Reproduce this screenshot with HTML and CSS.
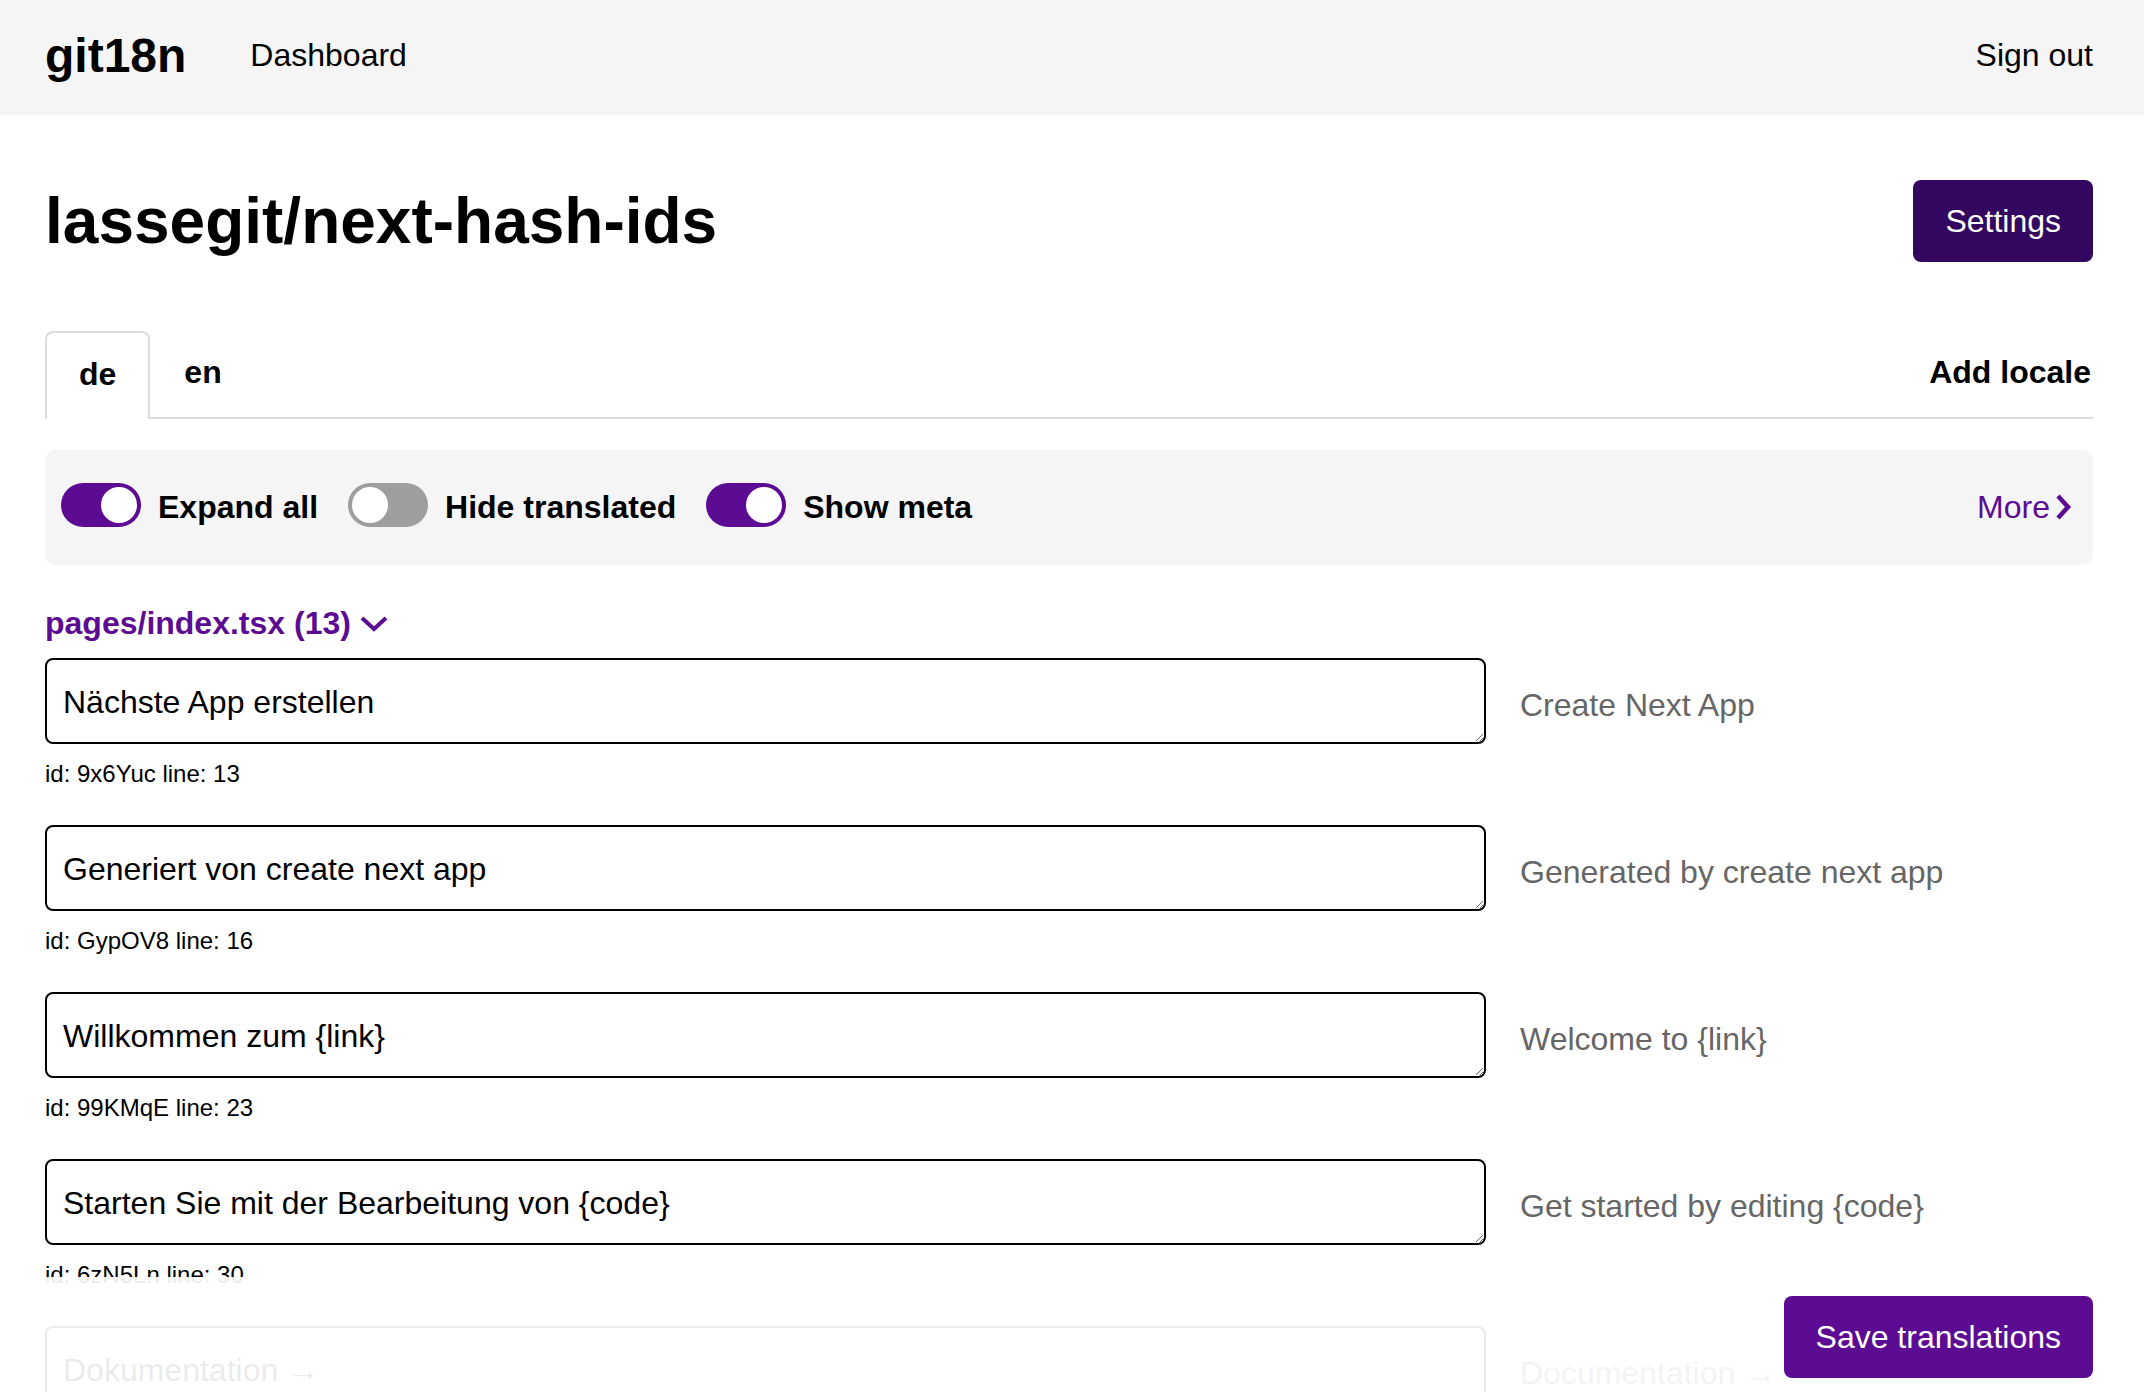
FILE: index.html
```html
<!DOCTYPE html>
<html lang="de">
<head>
<meta charset="utf-8">
<title>git18n – lassegit/next-hash-ids</title>
<link rel="stylesheet" href="styles.css">
</head>
<body>
<header class="topbar">
  <a class="logo" href="#">git18n</a>
  <a class="nav-link" href="#">Dashboard</a>
  <a class="nav-link signout" href="#">Sign out</a>
</header>

<main class="page">
  <div class="title-row">
    <h1 class="repo-title">lassegit/next-hash-ids</h1>
    <button class="btn btn-dark">Settings</button>
  </div>

  <nav class="tabs">
    <a class="tab active" href="#">de</a>
    <a class="tab" href="#">en</a>
    <a class="tab add-locale" href="#">Add locale</a>
  </nav>

  <div class="toolbar">
    <label class="toggle-item"><span class="switch on"></span><span class="toggle-label">Expand all</span></label>
    <label class="toggle-item"><span class="switch"></span><span class="toggle-label">Hide translated</span></label>
    <label class="toggle-item"><span class="switch on"></span><span class="toggle-label">Show meta</span></label>
    <a class="more" href="#">More<svg class="chev-right" viewBox="0 0 18 28" width="18" height="28"><path d="M4 3 L14 14 L4 25" fill="none" stroke="currentColor" stroke-width="4.5"/></svg></a>
  </div>

  <section class="file-group">
    <h2 class="file-title">pages/index.tsx (13)<svg class="chev-down" viewBox="0 0 30 18" width="30" height="18"><path d="M3 3 L15 14 L27 3" fill="none" stroke="currentColor" stroke-width="4"/></svg></h2>

    <div class="row">
      <div class="cell">
        <textarea class="field">Nächste App erstellen</textarea>
        <div class="meta">id: 9x6Yuc line: 13</div>
      </div>
      <div class="source">Create Next App</div>
    </div>

    <div class="row">
      <div class="cell">
        <textarea class="field">Generiert von create next app</textarea>
        <div class="meta">id: GypOV8 line: 16</div>
      </div>
      <div class="source">Generated by create next app</div>
    </div>

    <div class="row">
      <div class="cell">
        <textarea class="field">Willkommen zum {link}</textarea>
        <div class="meta">id: 99KMqE line: 23</div>
      </div>
      <div class="source">Welcome to {link}</div>
    </div>

    <div class="row">
      <div class="cell">
        <textarea class="field">Starten Sie mit der Bearbeitung von {code}</textarea>
        <div class="meta">id: 6zN5Ln line: 30</div>
      </div>
      <div class="source">Get started by editing {code}</div>
    </div>

    <div class="row">
      <div class="cell">
        <textarea class="field">Dokumentation →</textarea>
        <div class="meta">id: Qm3sTz line: 36</div>
      </div>
      <div class="source">Documentation →</div>
    </div>
  </section>
</main>

<footer class="save-bar">
  <button class="btn btn-purple">Save translations</button>
</footer>
</body>
</html>
```

FILE: styles.css
```css
html {
  scrollbar-width: none;
}

body {
  margin: 0;
  font-family: "Liberation Sans", Arial, Helvetica, sans-serif;
  color: #000;
  background: #fff;
}

a {
  color: inherit;
  text-decoration: none;
}

/* ---------- top bar ---------- */
.topbar {
  height: 115px;
  box-sizing: border-box;
  display: flex;
  align-items: center;
  padding: 0 51px 5px 45px;
  background: #f5f5f5;
}

.logo {
  font-size: 48px;
  font-weight: 700;
}

.nav-link {
  font-size: 32px;
  margin-left: 64px;
}

.signout {
  margin-left: auto;
}

/* ---------- page ---------- */
.page {
  padding: 0 51px 0 45px;
}

.title-row {
  display: flex;
  align-items: center;
  justify-content: space-between;
  margin-top: 65px;
  height: 82px;
}

.repo-title {
  margin: 0;
  font-size: 64px;
  font-weight: 700;
  line-height: 1;
}

.btn {
  border: none;
  border-radius: 8px;
  color: #fff;
  font-family: inherit;
  font-size: 32px;
  line-height: 48px;
  padding: 17px 32px;
  cursor: pointer;
}

.btn-dark {
  background: #33065f;
}

.btn-purple {
  background: #5c0c92;
}

/* ---------- tabs ---------- */
.tabs {
  display: flex;
  margin-top: 69px;
  border-bottom: 2px solid #dcdcdc;
  height: 86px;
}

.tab {
  display: flex;
  align-items: center;
  padding: 0 32px 8px;
  font-size: 32px;
  font-weight: 700;
  border: 2px solid transparent;
  border-bottom: none;
  border-radius: 8px 8px 0 0;
  margin-bottom: -2px;
}

.tab.active {
  border-color: #dcdcdc;
  background: #fff;
  padding-bottom: 4px;
}

.add-locale {
  margin-left: auto;
  padding-right: 0;
}

/* ---------- toolbar ---------- */
.toolbar {
  display: flex;
  align-items: center;
  margin-top: 31px;
  height: 115px;
  box-sizing: border-box;
  padding: 0 21px 0 16px;
  background: #f5f5f5;
  border-radius: 10px;
  gap: 30px;
}

.toggle-item {
  display: flex;
  align-items: center;
  gap: 17px;
  cursor: pointer;
}

.switch {
  position: relative;
  width: 80px;
  height: 44px;
  border-radius: 22px;
  background: #9e9e9e;
  margin-top: -6px;
}

.switch::after {
  content: "";
  position: absolute;
  top: 4px;
  left: 4px;
  width: 36px;
  height: 36px;
  border-radius: 50%;
  background: #fff;
}

.switch.on {
  background: #5c0c92;
}

.switch.on::after {
  left: auto;
  right: 4px;
}

.toggle-label {
  font-size: 32px;
  font-weight: 700;
}

.more {
  margin-left: auto;
  display: flex;
  align-items: center;
  gap: 4px;
  font-size: 32px;
  color: #5c0c92;
}

.chev-right {
  display: block;
  margin-top: -2px;
}

/* ---------- file group ---------- */
.file-title {
  display: flex;
  align-items: center;
  gap: 8px;
  margin: 38px 0 15px;
  font-size: 32px;
  line-height: 40px;
  font-weight: 700;
  color: #5c0c92;
}

.chev-down {
  display: block;
  margin-top: 2px;
}

.row {
  display: grid;
  grid-template-columns: 1441px 1fr;
  column-gap: 34px;
  margin-bottom: 37px;
}

.field {
  display: block;
  width: 100%;
  height: 86px;
  box-sizing: border-box;
  padding: 18px 16px 14px;
  border: 2px solid #000;
  border-radius: 8px;
  font-family: inherit;
  font-size: 32px;
  line-height: 48px;
  color: #000;
  resize: vertical;
}

.meta {
  margin-top: 16px;
  font-size: 24px;
  line-height: 28px;
}

.source {
  padding-top: 23px;
  font-size: 32px;
  line-height: 48px;
  color: #666;
}

/* ---------- sticky save bar ---------- */
.save-bar {
  position: fixed;
  left: 0;
  right: 0;
  bottom: 0;
  height: 115px;
  box-sizing: border-box;
  display: flex;
  align-items: center;
  justify-content: flex-end;
  padding: 4px 51px 0;
  background: rgba(255, 255, 255, 0.92);
}
```
